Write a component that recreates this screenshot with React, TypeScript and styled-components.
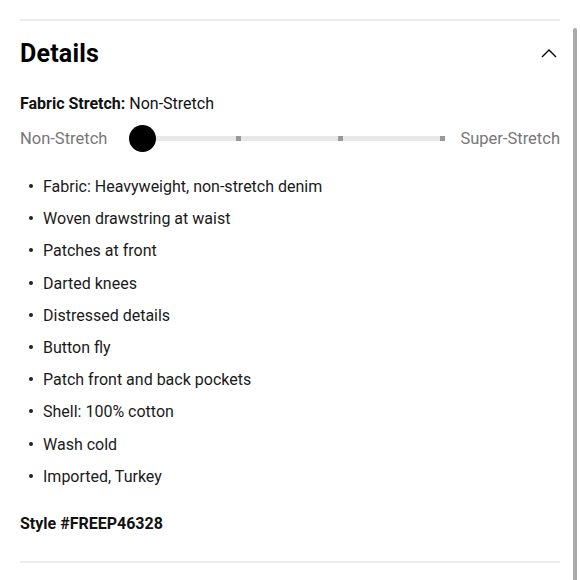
import styled, { createGlobalStyle } from "styled-components";

const GlobalStyle = createGlobalStyle`
  body {
    margin: 0;
    background: #fff;
    font-family: Roboto, "Liberation Sans", Arial, sans-serif;
    color: #111;
  }
`;

const Page = styled.div`
  position: relative;
  width: 580px;
  height: 580px;
  overflow: hidden;
  padding: 19px 20px 0 20px;
  box-sizing: border-box;
`;

// mobile style scroll indicator on the right edge
const ScrollThumb = styled.div`
  position: absolute;
  right: 3px;
  top: 28px;
  width: 4px;
  height: 560px;
  border-radius: 2px;
  background: #ababab;
`;

const Divider = styled.div`
  height: 2px;
  background: #ececec;
`;

const Header = styled.div`
  display: flex;
  justify-content: space-between;
  align-items: center;
  height: 68px;
  margin-top: -2px;
`;

const Title = styled.h2`
  margin: 0;
  font-size: 25px;
  font-weight: 700;
  letter-spacing: 0.2px;
  color: #000;
`;

const Stretch = styled.div`
  font-size: 16px;
  margin-top: 7px;
  color: #111;
  b {
    font-weight: 700;
  }
`;

const SliderRow = styled.div`
  display: flex;
  align-items: center;
  margin-top: 12px;
  height: 26px;
`;

const SliderLabel = styled.span<{ push?: boolean }>`
  font-size: 16.5px;
  color: #777;
  margin-left: ${({ push }) => (push ? "auto" : "0")};
`;

const Track = styled.div`
  position: relative;
  display: flex;
  justify-content: space-between;
  width: 311px;
  height: 5px;
  background: #e8e8e8;
  margin-left: 27px;
`;

const Tick = styled.div`
  width: 5px;
  height: 5px;
  background: #999;
`;

const Thumb = styled.div`
  position: absolute;
  left: -5px;
  top: -11px;
  width: 27px;
  height: 27px;
  border-radius: 50%;
  background: #000;
`;

const List = styled.ul`
  list-style: none;
  margin: 26px 0 0 0;
  padding: 0;
  display: flex;
  flex-direction: column;
  gap: 13.2px;
`;

const Item = styled.li`
  position: relative;
  padding-left: 23px;
  font-size: 16px;
  line-height: 19px;
  color: #1a1a1a;
  &::before {
    content: "";
    position: absolute;
    left: 9px;
    top: 7px;
    width: 4px;
    height: 4px;
    border-radius: 50%;
    background: #222;
  }
`;

const StyleNo = styled.div`
  margin-top: 28px;
  font-size: 16px;
  font-weight: 700;
  color: #111;
`;

const BottomDivider = styled(Divider)`
  margin-top: 28px;
`;

const items = [
  "Fabric: Heavyweight, non-stretch denim",
  "Woven drawstring at waist",
  "Patches at front",
  "Darted knees",
  "Distressed details",
  "Button fly",
  "Patch front and back pockets",
  "Shell: 100% cotton",
  "Wash cold",
  "Imported, Turkey",
];

const App = () => {
  return (
    <Page>
      <GlobalStyle />
      <ScrollThumb />
      <Divider />
      <Header>
        <Title>Details</Title>
        <svg width="18" height="12" viewBox="0 0 18 12" style={{ marginRight: 2 }}>
          <path d="M2 10 L9 3 L16 10" fill="none" stroke="#000" strokeWidth="1.4" />
        </svg>
      </Header>
      <Stretch>
        <b>Fabric Stretch:</b> Non-Stretch
      </Stretch>
      <SliderRow>
        <SliderLabel>Non-Stretch</SliderLabel>
        <Track>
          <Tick />
          <Tick />
          <Tick />
          <Tick />
          <Thumb />
        </Track>
        <SliderLabel push>Super-Stretch</SliderLabel>
      </SliderRow>
      <List>
        {items.map((t) => (
          <Item key={t}>{t}</Item>
        ))}
      </List>
      <StyleNo>Style #FREEP46328</StyleNo>
      <BottomDivider />
    </Page>
  );
};

export default App;
